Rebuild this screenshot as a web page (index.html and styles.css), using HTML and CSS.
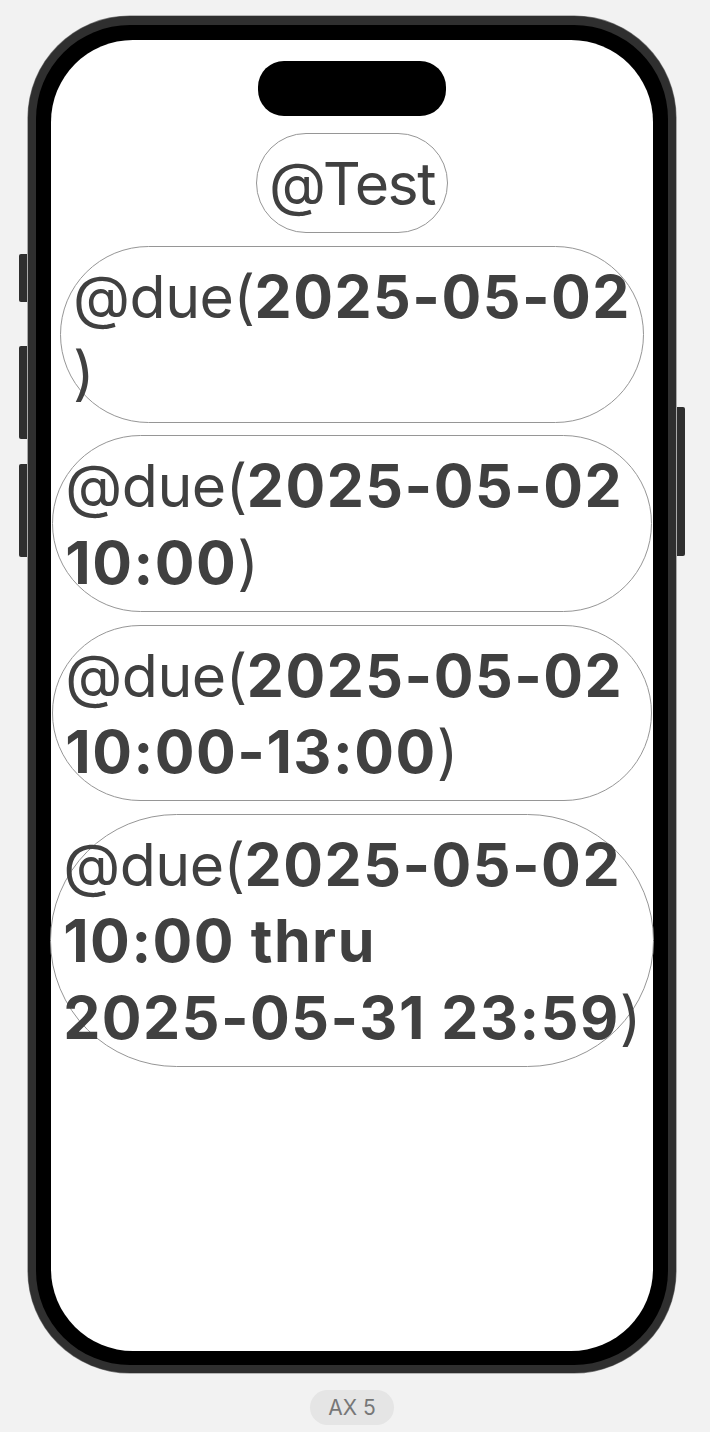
FILE: index.html
```html
<!DOCTYPE html>
<html lang="en">
<head>
<meta charset="utf-8">
<title>AX 5</title>
<link rel="stylesheet" href="styles.css">
</head>
<body>
<div class="device">
  <span class="btn btn-action"></span>
  <span class="btn btn-vol-up"></span>
  <span class="btn btn-vol-down"></span>
  <span class="btn btn-power"></span>
  <div class="bezel">
    <div class="screen">
      <div class="island"></div>
      <div class="tag tag-solo"><span class="r">@Test</span></div>
      <div class="tag"><span class="r">@due(</span><span class="b">2025-05-02</span><br><span class="r">)</span></div>
      <div class="tag"><span class="r">@due(</span><span class="b">2025-05-02&nbsp;<br>10:00</span><span class="r">)</span></div>
      <div class="tag"><span class="r">@due(</span><span class="b">2025-05-02&nbsp;<br>10:00-13:00</span><span class="r">)</span></div>
      <div class="tag"><span class="r">@due(</span><span class="b">2025-05-02&nbsp;<br>10:00 thru<br>2025-05-31 23:59</span><span class="r">)</span></div>
    </div>
  </div>
</div>
<div class="badge">AX 5</div>
</body>
</html>
```
FILE: styles.css
```css
html {
  margin: 0;
  padding: 0;
  background: #f2f2f2;
}
body {
  margin: 0;
  padding: 0;
  width: 704px;
  height: 1432px;
  overflow: hidden;
  background: #f2f2f2;
  font-family: Inter, "Noto Sans", "Liberation Sans", sans-serif;
  display: flex;
  flex-direction: column;
  align-items: center;
}
.device {
  position: relative;
  margin-top: 16px;
  width: 648px;
  height: 1357px;
  box-sizing: border-box;
  padding: 9px 8px 8px;
  background: #2f2f2f;
  border-radius: 102px;
  box-shadow: 0 0 0 0.6px #7a7a7a;
}
.btn {
  position: absolute;
  width: 8px;
  background: #2f2f2f;
}
.btn-action { left: -9px; top: 238px; height: 48px; border-radius: 2px 0 0 2px; }
.btn-vol-up { left: -9px; top: 330px; height: 93px; border-radius: 2px 0 0 2px; }
.btn-vol-down { left: -9px; top: 448px; height: 93px; border-radius: 2px 0 0 2px; }
.btn-power { right: -9px; top: 391px; height: 149px; border-radius: 0 2px 2px 0; }
.bezel {
  height: 100%;
  box-sizing: border-box;
  padding: 15px 15px 14px;
  background: #000;
  border-radius: 94px;
}
.screen {
  position: relative;
  height: 100%;
  box-sizing: border-box;
  background: #fff;
  border-radius: 82px;
  padding-top: 93px;
  display: flex;
  flex-direction: column;
  align-items: center;
  gap: 12.67px;
}
.island {
  position: absolute;
  top: 21px;
  left: 50%;
  transform: translateX(-50%);
  width: 188px;
  height: 55px;
  border-radius: 26px;
  background: #000;
}
.tag {
  flex: none;
  white-space: nowrap;
  padding: 12px 12px 10px;
  border: 1px solid #969696;
  border-radius: 9999px;
  font-size: 59px;
  line-height: 76.33px;
  color: #404040;
  box-sizing: border-box;
}
.tag .r {
  font-weight: 400;
  letter-spacing: -0.5px;
}
.tag .b {
  font-weight: 700;
  letter-spacing: 1.5px;
}
.tag-solo .r {
  letter-spacing: -1.5px;
}
.badge {
  margin-top: 17px;
  height: 35px;
  padding: 0 18px;
  border-radius: 18px;
  background: #e5e5e5;
  color: #777;
  font-size: 21px;
  line-height: 35px;
}
```
